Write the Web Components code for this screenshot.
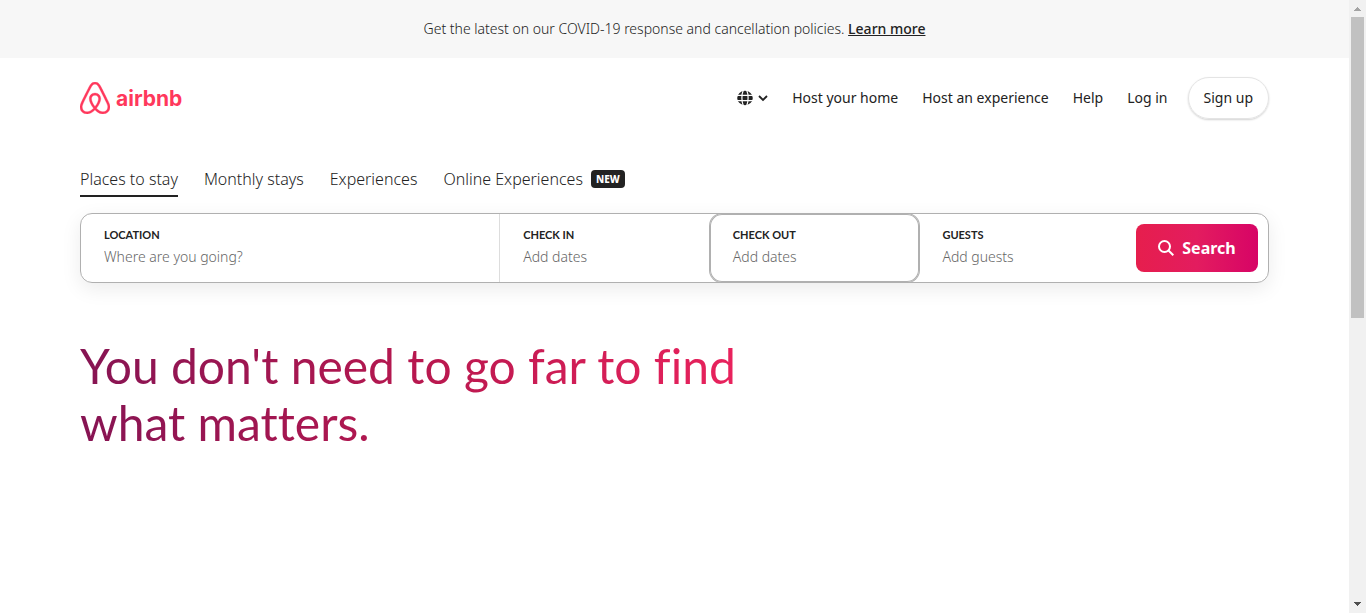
<!DOCTYPE html>
<html lang="en">
<head>
<meta charset="utf-8">
<title>Airbnb: Vacation Rentals, Homes and Experiences</title>
<style>
body { margin: 0; background: #fff; color: #222; font: 400 14px/20px "Noto Sans", sans-serif; }
</style>
</head>
<body>
<app-shell>
  <notice-bar>Get the latest on our COVID-19 response and cancellation policies.</notice-bar>
  <site-header>
    <nav-link>Host your home</nav-link>
    <nav-link>Host an experience</nav-link>
    <nav-link>Help</nav-link>
    <nav-link>Log in</nav-link>
  </site-header>
  <category-tabs>
    <category-tab active>Places to stay</category-tab>
    <category-tab>Monthly stays</category-tab>
    <category-tab>Experiences</category-tab>
    <category-tab badge="NEW">Online Experiences</category-tab>
  </category-tabs>
  <search-bar>
    <search-text label="Location" placeholder="Where are you going?"></search-text>
    <search-field label="Check in" divided>Add dates</search-field>
    <search-field label="Check out" focused>Add dates</search-field>
    <search-field label="Guests">Add guests</search-field>
  </search-bar>
  <hero-title>You don't need to go far to find what matters.</hero-title>
</app-shell>

<script>
class Base extends HTMLElement {
  connectedCallback() {
    if (this.shadowRoot) return;
    this.attachShadow({ mode: 'open' }).innerHTML =
      `<style>*{box-sizing:border-box}button,input{font:inherit;color:inherit;background:none;border:0;margin:0;padding:0}button{cursor:pointer}</style>` + this.render();
  }
}

customElements.define('app-shell', class extends Base {
  render() { return `<style>
    :host { display: grid; grid-template-columns: minmax(0, 1fr) 17px; min-height: 100vh; }
    main { min-width: 0; }
    </style><main><slot></slot></main><scroll-rail></scroll-rail>`; }
});

customElements.define('scroll-rail', class extends Base {
  render() { return `<style>
    :host { display: grid; grid-template-rows: 17px 1fr 17px; justify-items: center; position: sticky; top: 0; height: 100vh; background: #f1f1f1; }
    .thumb { width: 13px; height: 52%; background: #c1c1c1; }
    svg { display: block; width: 17px; height: 17px; }
    </style>
    <svg viewBox="0 0 17 17" aria-hidden="true"><path fill="#a3a3a3" d="M8 7h1v1h1v1h1v1h1v1H5v-1h1V9h1V8h1z"/></svg>
    <div class="thumb"></div>
    <svg viewBox="0 0 17 17" aria-hidden="true"><path fill="#505050" d="M5 6h7v1h-1v1h-1v1H9v1H8V9H7V8H6V7H5z"/></svg>`; }
});

customElements.define('notice-bar', class extends Base {
  render() { return `<style>
    :host { display: block; padding: 19px 24px; background: #f7f7f7; text-align: center; font-weight: 300; }
    a { color: inherit; font-weight: 500; }
    </style><slot></slot> <a href="#covid">Learn more</a>`; }
});

customElements.define('brand-logo', class extends Base {
  render() { return `<style>
    :host { display: block; }
    a { display: flex; align-items: center; gap: 6px; color: #ff385c; text-decoration: none; font: 700 21px/32px Inter, sans-serif; }
    svg { display: block; width: 30px; height: 32px; }
    span { padding-top: 2px; }
    </style><a href="#home">
    <svg viewBox="2.5 1 27 30" preserveAspectRatio="none" fill="currentColor" aria-hidden="true"><path d="M16 1c2.008 0 3.463.963 4.751 3.269l.533 1.025c1.954 3.83 6.114 12.54 7.1 14.836l.145.353c.667 1.591.91 2.472.96 3.396l.01.415.001.228c0 4.062-2.877 6.478-6.357 6.478-2.224 0-4.556-1.258-6.709-3.386l-.257-.26-.172-.179h-.011l-.176.185c-2.044 2.1-4.267 3.42-6.414 3.615l-.28.019-.267.006C5.377 31 2.5 28.584 2.5 24.522l.005-.469c.026-.928.23-1.768.83-3.244l.216-.524c.966-2.298 6.083-12.989 7.707-16.034C12.537 1.963 13.992 1 16 1zm0 2c-1.239 0-2.053.539-2.987 2.21l-.523 1.008c-1.926 3.776-6.06 12.43-7.031 14.692l-.345.836c-.427 1.071-.573 1.655-.605 2.24l-.009.33v.206C4.5 27.395 6.411 29 8.857 29c1.773 0 3.87-1.236 5.831-3.354-2.295-2.938-3.855-6.45-3.855-8.91 0-2.913 1.933-5.386 5.178-5.42 3.223.034 5.156 2.507 5.156 5.42 0 2.456-1.555 5.96-3.855 8.907C19.277 27.766 21.37 29 23.142 29c2.447 0 4.358-1.605 4.358-4.478l-.004-.411c-.019-.672-.17-1.296-.714-2.62l-.248-.6c-1.065-2.478-5.993-12.768-7.538-15.664C18.053 3.539 17.24 3 16 3zm.01 10.316c-2.01.021-3.177 1.514-3.177 3.42 0 1.797 1.18 4.58 2.955 7.044l.212.287.174-.234c1.73-2.385 2.898-5.066 2.989-6.875l.006-.221c0-1.906-1.167-3.4-3.16-3.421z" stroke="currentColor" stroke-width=".3"/></svg>
    <span>airbnb</span></a>`; }
});

customElements.define('nav-link', class extends Base {
  render() { return `<style>
    :host { display: block; white-space: nowrap; }
    a { color: inherit; text-decoration: none; }
    </style><a href="#"><slot></slot></a>`; }
});

customElements.define('site-header', class extends Base {
  render() { return `<style>
    :host { display: flex; justify-content: space-between; align-items: center; height: 80px; padding: 0 80px; }
    nav { display: flex; align-items: center; gap: 24px; }
    .lang { display: flex; align-items: center; gap: 5px; }
    .lang svg { display: block; }
    .signup { height: 42px; padding: 0 15px; margin-left: -4px; border: 1px solid #e4e4e4; border-radius: 21px; box-shadow: 0 1px 2px rgba(0,0,0,.18); }
    </style>
    <brand-logo></brand-logo>
    <nav>
      <button class="lang" aria-label="Choose a language and currency">
        <svg width="16" height="16" viewBox="0 0 16 16" aria-hidden="true"><ellipse cx="8" cy="8" rx="7.8" ry="7.2" fill="#222"/><g fill="none" stroke="#fff" stroke-width="1.2"><path d="M0 5.3h16M0 10.7h16"/><path d="M6.4 0C4.4 4 4.4 12 6.4 16M9.6 0c2 4 2 12 0 16"/></g></svg>
        <svg width="10" height="10" viewBox="0 0 10 10" aria-hidden="true"><path d="M1 3l4 4 4-4" fill="none" stroke="#222" stroke-width="1.8"/></svg>
      </button>
      <slot></slot>
      <button class="signup">Sign up</button>
    </nav>`; }
});

customElements.define('category-tabs', class extends Base {
  render() { return `<style>
    :host { display: block; padding: 29px 80px 16px; }
    nav { display: flex; gap: 26px; }
    </style><nav aria-label="Categories"><slot></slot></nav>`; }
});

customElements.define('category-tab', class extends Base {
  render() { const badge = this.getAttribute('badge'); return `<style>
    :host { display: block; font-weight: 300; font-size: 16px; line-height: 24px; white-space: nowrap; }
    a { display: flex; align-items: center; gap: 8px; color: inherit; text-decoration: none; }
    .box { display: block; padding-bottom: 4px; border-bottom: 2px solid transparent; }
    :host([active]) .box { border-color: #222; }
    .badge { padding: 0 5px; border-radius: 4px; background: #222; color: #fff; font: 800 10px/18px "Noto Sans", sans-serif; }
    </style><div class="box"><a href="#"><slot></slot>${badge ? `<span class="badge">${badge}</span>` : ''}</a></div>`; }
});

const fieldStyle = `
    :host { display: block; min-width: 0; }
    .label { display: block; font: 700 11px/16px Lato, sans-serif; text-transform: uppercase; }
    .value { display: block; width: 100%; height: 20px; margin-top: 4px; font-weight: 300; line-height: 20px; color: #666; }
    .field { display: block; width: 100%; height: 68px; padding: 13px 23px 15px; text-align: left; }`;

customElements.define('search-text', class extends Base {
  render() { return `<style>${fieldStyle}
    input { outline: 0; }
    input::placeholder { color: #666; opacity: 1; }
    </style><label class="field"><span class="label">${this.getAttribute('label')}</span>
    <input class="value" type="text" placeholder="${this.getAttribute('placeholder')}"></label>`; }
});

customElements.define('search-field', class extends Base {
  render() { return `<style>${fieldStyle}
    :host([divided]) .field { box-shadow: -1px 0 #ddd; }
    :host([focused]) .field { border-radius: 12px; box-shadow: 0 0 0 1px #b0b0b0, inset 0 0 0 1px #b0b0b0; }
    </style><button class="field" type="button"><span class="label">${this.getAttribute('label')}</span>
    <span class="value"><slot></slot></span></button>`; }
});

customElements.define('search-bar', class extends Base {
  render() { return `<style>
    :host { display: block; padding: 0 80px; }
    form { display: grid; grid-template-columns: 2fr 1fr 1fr 1fr auto; align-items: center; border: 1px solid #b0b0b0; border-radius: 12px; box-shadow: 0 6px 20px rgba(0,0,0,.08); }
    .go { display: flex; align-items: center; justify-content: center; gap: 8px; width: 122px; height: 48px; margin: 0 10px 0 7px; border-radius: 8px; color: #fff; font-weight: 700; font-size: 16px; line-height: 20px;
      background: linear-gradient(90deg, #e61e4d 0%, #e31c5f 50%, #d70466 100%); }
    </style><form><slot></slot>
    <button class="go" type="button"><svg width="16" height="16" viewBox="0 0 16 16" fill="none" stroke="currentColor" stroke-width="2" aria-hidden="true"><circle cx="6.5" cy="6.5" r="5.5"/><path d="M10.5 10.5l4.8 4.8"/></svg><span>Search</span></button></form>`; }
});

customElements.define('hero-title', class extends Base {
  render() { return `<style>
    :host { display: block; padding: 54px 80px; }
    h1 { margin: 0; max-width: 700px; font: 400 48px/57px Lato, sans-serif; font-variant-ligatures: none; color: transparent;
      background: linear-gradient(90deg, #861453 0%, #b9184f 50%, #f0245f 100%); -webkit-background-clip: text; background-clip: text; }
    </style><h1><slot></slot></h1>`; }
});
</script>
</body>
</html>
